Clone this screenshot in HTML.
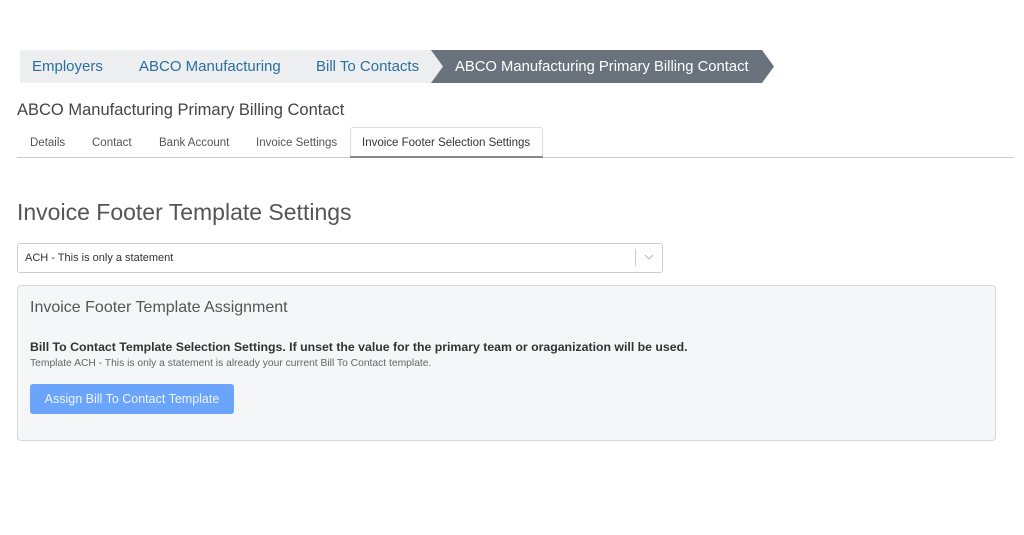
<!DOCTYPE html>
<html><head><style>
body{margin:0;width:1024px;height:535px;background:#fff;font-family:"Liberation Sans",sans-serif;position:relative;overflow:hidden}
.bc{position:absolute;top:50px;height:33px;line-height:34px;font-size:15px;color:#2a6f9e;background:#eceef0}
.t{position:absolute;white-space:nowrap}
</style></head><body>
<div class="bc" style="left:20px;width:108px;clip-path:polygon(0 0,96px 0,108px 50%,96px 100%,0 100%)"><span style="padding-left:12px">Employers</span></div>
<div class="bc" style="left:115px;width:190px;clip-path:polygon(0 0,178px 0,190px 50%,178px 100%,0 100%,12px 50%)"><span style="padding-left:24px">ABCO Manufacturing</span></div>
<div class="bc" style="left:292px;width:152px;clip-path:polygon(0 0,140px 0,152px 50%,140px 100%,0 100%,12px 50%)"><span style="padding-left:24px">Bill To Contacts</span></div>
<div class="bc" style="left:431px;width:343px;background:#6a737d;color:#fff;font-size:14.8px;clip-path:polygon(0 0,331px 0,343px 50%,331px 100%,0 100%,12px 50%)"><span style="padding-left:24px">ABCO Manufacturing Primary Billing Contact</span></div>
<div class="t" style="left:17px;top:101px;font-size:16.5px;color:#444">ABCO Manufacturing Primary Billing Contact</div>
<div style="position:absolute;left:17px;top:157px;width:997px;height:1px;background:#ccc"></div>
<div class="t" style="left:30px;top:137px;font-size:11.5px;color:#555">Details</div>
<div class="t" style="left:92px;top:137px;font-size:11.5px;color:#555">Contact</div>
<div class="t" style="left:159px;top:137px;font-size:11.5px;color:#555">Bank Account</div>
<div class="t" style="left:256px;top:137px;font-size:11.5px;color:#555">Invoice Settings</div>
<div style="position:absolute;left:350px;top:127px;width:191px;height:30px;border:1px solid #ddd;border-bottom:none;border-radius:3px 3px 0 0;background:#fff"></div>
<div style="position:absolute;left:350px;top:156px;width:193px;height:2px;background:#888"></div>
<div class="t" style="left:362px;top:137px;font-size:11.5px;color:#333">Invoice Footer Selection Settings</div>
<div class="t" style="left:17px;top:199px;font-size:23px;color:#555">Invoice Footer Template Settings</div>
<div style="position:absolute;left:17px;top:243px;width:644px;height:28px;border:1px solid #ccc;border-radius:3px"></div>
<div class="t" style="left:25px;top:252px;font-size:11px;color:#333">ACH - This is only a statement</div>
<div style="position:absolute;left:635px;top:249px;width:1px;height:17px;background:#ccc"></div>
<svg style="position:absolute;left:644px;top:254px" width="10" height="7"><path d="M1 1l4 4 4-4" fill="none" stroke="#bbb" stroke-width="1"/></svg>
<div style="position:absolute;left:17px;top:285px;width:977px;height:154px;border:1px solid #d6d8db;border-radius:4px;background:#f5f6f8"></div>
<div class="t" style="left:30px;top:299px;font-size:16px;color:#555">Invoice Footer Template Assignment</div>
<div class="t" style="left:30px;top:340px;font-size:12.3px;color:#333;font-weight:bold">Bill To Contact Template Selection Settings. If unset the value for the primary team or oraganization will be used.</div>
<div class="t" style="left:30px;top:358px;font-size:10.3px;color:#666">Template ACH - This is only a statement is already your current Bill To Contact template.</div>
<div style="position:absolute;left:30px;top:384px;width:204px;height:30px;background:#6ba5fb;border-radius:3px;color:#eef4ff;font-size:12.5px;line-height:31px;text-align:center">Assign Bill To Contact Template</div>
</body></html>
